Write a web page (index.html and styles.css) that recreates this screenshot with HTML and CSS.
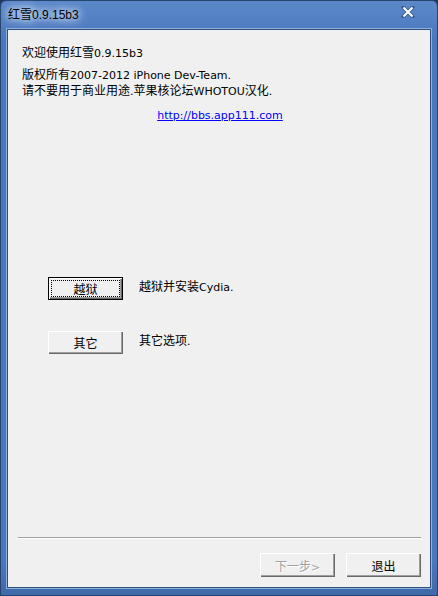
FILE: index.html
```html
<!DOCTYPE html>
<html>
<head>
    <meta charset="utf-8">
    <link rel="stylesheet" href="styles.css">
</head>
<body>
    <div class="window">
        <!-- title bar -->
        <div class="titlebar">
            <span class="title">红雪0.9.15b3</span>
            <span class="close">
                <svg width="14" height="12" viewBox="0 0 14 12">
                    <path d="M2 1 L12 11 M12 1 L2 11" stroke="#3a5a8a" stroke-width="3.4" stroke-linecap="round"/>
                    <path d="M2.5 1.5 L11.5 10.5 M11.5 1.5 L2.5 10.5" stroke="#fff" stroke-width="2"/>
                </svg>
            </span>
        </div>

        <!-- client area -->
        <div class="client">
            <div class="content">
                <p class="welcome">欢迎使用红雪<span class="en">0.9.15b3</span></p>
                <p class="copyright">版权所有<span class="en">2007-2012 iPhone Dev-Team.</span><br>请不要用于商业用途<span class="en">.</span>苹果核论坛<span class="en">WHOTOU</span>汉化<span class="en">.</span></p>
                <p class="link"><a href="#" class="en">http://bbs.app111.com</a></p>

                <div class="options">
                    <div class="option">
                        <button class="btn default"><span class="focus">越狱</span></button>
                        <span class="desc">越狱并安装<span class="en">Cydia.</span></span>
                    </div>
                    <div class="option">
                        <button class="btn">其它</button>
                        <span class="desc">其它选项<span class="en">.</span></span>
                    </div>
                </div>
            </div>

            <div class="footer">
                <div class="separator"></div>
                <div class="actions">
                    <button class="btn" disabled>下一步<span class="en">&gt;</span></button>
                    <button class="btn">退出</button>
                </div>
            </div>
        </div>
    </div>
</body>
</html>
```

FILE: styles.css
```css
/* page */
html, body {
    margin: 0;
    padding: 0;
    background: #1d3a63;
}

.window {
    width: 438px;
    height: 596px;
    box-sizing: border-box;
    background: linear-gradient(#5b88c9, #4a78bc 40px, #4a78bc 560px, #3f6aa8);
    border: 1px solid #27446f;
    border-radius: 6px 6px 0 0;
    display: flex;
    flex-direction: column;
    padding: 0 6px 7px 6px;
    font-family: "Noto Sans CJK SC", sans-serif;
    font-size: 12px;
    color: #000;
}

/* latin runs look like Tahoma */
.en {
    font-family: "DejaVu Sans", sans-serif;
    font-size: 11px;
    line-height: 10px;
}

/* title bar */
.titlebar {
    height: 28px;
    display: flex;
    align-items: center;
    justify-content: space-between;
}

.title {
    margin-left: 1px;
    margin-top: -3px;
    font-family: "Liberation Sans", "Noto Sans CJK SC", sans-serif;
    font-size: 12px;
    color: #000;
    text-shadow: 0 0 6px #dce8f8, 0 0 10px #dce8f8, 0 0 12px #c4d6f0;
}

.close {
    display: flex;
    margin-right: 16px;
    margin-top: -6px;
}

/* client area */
.client {
    flex: 1;
    background: #f0f0f0;
    border: 1px solid #2d4f80;
    box-shadow: 0 0 0 1px #8fb0dc;
    display: flex;
    flex-direction: column;
    justify-content: space-between;
}

.content {
    padding: 14px 14px 0 14px;
}

p {
    margin: 0;
    line-height: 16px;
}

.copyright {
    margin-top: 6px;
}

.link {
    margin-top: 8px;
    text-align: center;
    padding-left: 2px;
}

.link a {
    color: #0000ff;
}

.options {
    margin-top: 155px;
    padding-left: 26px;
    display: flex;
    flex-direction: column;
    gap: 31px;
}

.option {
    display: flex;
    align-items: flex-start;
    gap: 16px;
}

.desc {
    line-height: 16px;
    margin-top: 1px;
}

/* classic buttons */
.btn {
    width: 75px;
    height: 23px;
    padding: 0;
    font-family: inherit;
    font-size: 12px;
    color: #000;
    background: #f0f0f0;
    border: none;
    box-shadow: inset 1px 1px 0 #fff, inset -1px -1px 0 #696969, inset -2px -2px 0 #a0a0a0;
}

.btn.default {
    border: 1px solid #000;
}

.focus {
    display: block;
    margin: 2px;
    height: 15px;
    line-height: 15px;
    border: 1px dotted #000;
}

.btn:disabled {
    color: #a0a0a0;
    text-shadow: 1px 1px 0 #fff;
}

/* footer */
.footer {
    padding: 0 9px 10px 10px;
}

.separator {
    border-top: 1px solid #a0a0a0;
    border-bottom: 1px solid #fff;
}

.actions {
    margin-top: 14px;
    display: flex;
    justify-content: flex-end;
    gap: 11px;
}

.actions .btn {
    height: 24px;
}
```
